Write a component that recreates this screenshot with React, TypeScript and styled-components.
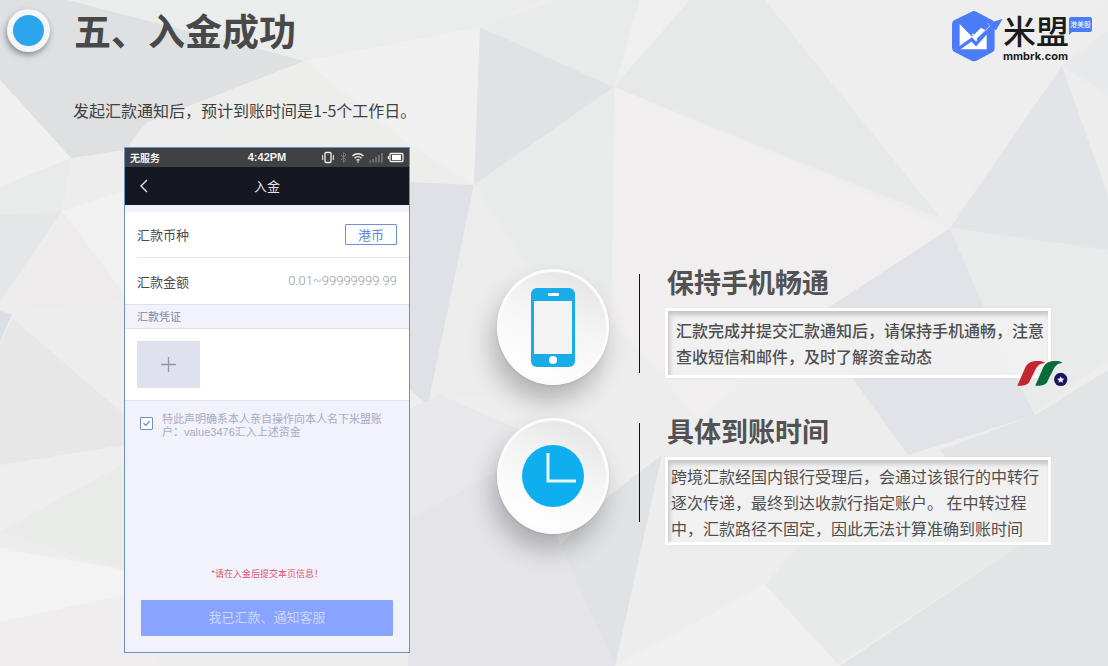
import React from "react";
import styled, { createGlobalStyle } from "styled-components";

const sans = `"Noto Sans CJK SC", "Liberation Sans", sans-serif`;
const latinFirst = `"Liberation Sans", "Noto Sans CJK SC", sans-serif`;

const GlobalStyle = createGlobalStyle`
  * { box-sizing: border-box; }
  body { margin: 0; font-family: ${sans}; background: #ededed; }
  h1, h2, p { margin: 0; }
  button, input { font-family: inherit; }
`;

const Page = styled.div`
  position: relative;
  isolation: isolate;
  min-height: 100vh;
  overflow: hidden;
`;

const Backdrop = styled.svg`
  position: absolute;
  inset: 0;
  z-index: -1;
  width: 100%;
  height: 100%;
`;

const Header = styled.header`
  display: flex;
  align-items: center;
  height: 64px;
  padding: 0 16px 0 7px;
`;

const Bullet = styled.span`
  width: 43px;
  height: 43px;
  margin-bottom: 4px;
  border: 6px solid #f6f6f6;
  border-radius: 50%;
  background: #2ba5ec;
  box-shadow: -1px 3px 6px rgba(0, 0, 0, 0.4);
`;

const Title = styled.h1`
  flex: 1;
  padding: 0 0 4px 24px;
  font-size: 37px;
  line-height: 60px;
  font-weight: 700;
  color: #484848;
`;

const Brand = styled.a`
  display: flex;
  align-items: flex-start;
  height: 52px;
  margin-top: 8px;
  color: #1b1b1b;
  text-decoration: none;
`;

const BrandMark = styled.svg`
  width: 52px;
  height: 52px;
`;

const BrandText = styled.span`
  display: flex;
  flex-direction: column;
  width: 66px;
`;

const BrandName = styled.span`
  font-size: 33px;
  line-height: 40px;
  font-weight: 500;
`;

const BrandDomain = styled.span`
  font: 700 11px/12px Inter, "Liberation Sans", sans-serif;
`;

const BrandTag = styled.span`
  position: relative;
  width: 23px;
  height: 15px;
  margin-top: 7px;
  border-radius: 2px;
  background: #4c7cf5;
  color: #fff;
  font-size: 7px;
  line-height: 15px;
  text-align: center;

  &::after {
    content: "";
    position: absolute;
    left: 0;
    top: 13px;
    border-left: 5px solid #4c7cf5;
    border-bottom: 5px solid transparent;
  }
`;

const Lead = styled.p`
  padding: 34px 16px 25px 73px;
  font-size: 16px;
  line-height: 24px;
  color: #3f3f3f;
`;

const Main = styled.main`
  display: flex;
  align-items: flex-start;
  gap: 87px;
  padding: 0 57px 13px 124px;
`;

const Phone = styled.section`
  flex: 0 0 286px;
  border: 1px solid #6d90c0;
  background: #f1f2fa;
`;

const StatusBar = styled.div`
  display: grid;
  grid-template-columns: 1fr auto 1fr;
  align-items: center;
  height: 19px;
  padding: 0 5px;
  background: #404144;
  color: #f2f2f2;
  font-size: 10px;
  line-height: 19px;
  font-weight: 700;
`;

const StatusTime = styled.span`
  font: 700 11px/19px "Liberation Sans", sans-serif;
`;

const StatusIcons = styled.svg`
  justify-self: end;
  width: 82px;
  height: 13px;
`;

const NavBar = styled.div`
  display: grid;
  grid-template-columns: 38px 1fr 38px;
  align-items: center;
  height: 38px;
  background: #151722;
  color: #e6e7eb;
  font-size: 13px;
  line-height: 38px;
  text-align: center;
`;

const BackButton = styled.button`
  display: grid;
  place-items: center;
  height: 38px;
  padding: 0;
  border: 0;
  background: none;
  color: inherit;
`;

const Fields = styled.div`
  margin-top: 7px;
  padding-left: 12px;
  background: #fff;
`;

const Field = styled.div<{ $divided?: boolean }>`
  display: flex;
  align-items: center;
  justify-content: space-between;
  height: 46px;
  padding-right: 12px;
  border-bottom: ${(p) => (p.$divided ? "1px solid #e4e5ea" : "0")};
  color: #4b4b4f;
  font-size: 13px;
`;

const CurrencyButton = styled.button`
  width: 52px;
  height: 21px;
  padding: 0;
  border: 1px solid #6f90de;
  border-radius: 1px;
  background: #fff;
  color: #6487dc;
  font-size: 13px;
  line-height: 17px;
`;

const AmountInput = styled.input`
  width: 130px;
  padding: 0;
  border: 0;
  background: none;
  font: 300 13px/20px Roboto, sans-serif;
  text-align: right;

  &::placeholder { color: #9798a5; opacity: 1; }
`;

const SectionLabel = styled.div`
  padding-left: 12px;
  border: solid #dfe1ec;
  border-width: 1px 0;
  color: #8286a4;
  font-size: 11px;
  line-height: 22px;
  padding-bottom: 1px;
`;

const Voucher = styled.div`
  padding: 12px;
  background: #fff;
  border-bottom: 1px solid #e2e4ee;
`;

const UploadButton = styled.button`
  display: grid;
  place-items: center;
  width: 63px;
  height: 47px;
  padding: 0;
  border: 0;
  background: #e0e1ee;
  color: #9395ab;
`;

const Declaration = styled.label`
  display: flex;
  gap: 9px;
  padding: 12px 12px 0 15px;
  color: #a9abc4;
  font: 11px/13px ${latinFirst};
`;

const Check = styled.input`
  appearance: none;
  flex: 0 0 13px;
  height: 13px;
  margin: 4px 0 0;
  border: 1px solid #6f8fce;
  border-radius: 1px;
  background: #fff url("data:image/svg+xml,%3Csvg xmlns='http://www.w3.org/2000/svg' viewBox='0 0 11 11'%3E%3Cpath d='M2.5 5.2l2.2 2.3 4-4.3' fill='none' stroke='%235f83cc' stroke-width='1.2'/%3E%3C/svg%3E");
`;

const Note = styled.p`
  margin-top: 128px;
  color: #dc5470;
  font: 9px/14px ${sans};
  text-align: center;
`;

const SubmitButton = styled.button`
  display: block;
  width: calc(100% - 32px);
  height: 36px;
  margin: 19px 16px 16px;
  padding: 0 0 2px;
  border: 0;
  border-radius: 1px;
  background: #88a4ff;
  color: #cbd6fd;
  font-size: 13px;
  line-height: 34px;
`;

const Notes = styled.section`
  flex: 1;
  display: flex;
  flex-direction: column;
  gap: 30px;
  padding-top: 119px;
`;

const Item = styled.article`
  display: flex;
  align-items: flex-start;
`;

const Disc = styled.div`
  flex: 0 0 112px;
  display: grid;
  place-items: center;
  height: 116px;
  margin-top: 3px;
  border: 3px solid #fbfbfb;
  border-radius: 50%;
  background: linear-gradient(205deg, #e3e3e3 5%, #f5f5f5 45%, #fdfdfd 80%);
  box-shadow: -5px 16px 24px rgba(0, 0, 0, 0.24), 0 1px 3px rgba(0, 0, 0, 0.08);
`;

const Rule = styled.span`
  flex: 0 0 1px;
  height: 99px;
  margin: 8px 25px 0 30px;
  background: #111;
`;

const ItemBody = styled.div`
  flex: 1;
  min-width: 0;
`;

const ItemTitle = styled.h2`
  padding: 0 0 2px 2px;
  font-size: 27px;
  line-height: 32px;
  font-weight: 700;
  color: #525252;
`;

const Panel = styled.div<{ $inset: string; $strong?: boolean }>`
  position: relative;
  margin-top: 8px;
  padding: ${(p) => p.$inset};
  border: 3px solid #fff;
  background: rgba(241, 241, 241, 0.92);
  box-shadow: inset 2px 4px 4px rgba(0, 0, 0, 0.18), 0 0 2px rgba(0, 0, 0, 0.06);
  color: #4f4f4f;
  font-size: 16px;
  font-weight: ${(p) => (p.$strong ? 500 : 400)};
  line-height: 26px;
`;

const Watermark = styled.svg`
  position: absolute;
  right: -20px;
  bottom: -12px;
  width: 51px;
  height: 27px;
`;

const facets: [string, string][] = [
  ["0,0 68,0 305,61 146,123 125,150 71,158 0,80", "#dee0e2"],
  ["68,0 540,0 480,27 305,61", "#ebecec"],
  ["305,61 480,27 474,185 410,145 146,123", "#f0f0f0"],
  ["305,61 410,145 474,185 410,182 146,123", "#ededec"],
  ["0,80 71,158 0,187", "#f0f0f0"],
  ["71,158 0,187 0,215 62,211", "#e8ebea"],
  ["0,215 62,211 0,302", "#e4e6e8"],
  ["62,211 122,293 122,300 12,311", "#edebec"],
  ["62,211 125,190 125,295", "#f1f1f1"],
  ["0,311 12,314 0,342", "#dcdfe6"],
  ["12,318 125,415 125,445 0,465 0,345", "#e7e7e7"],
  ["0,465 125,445 125,465 0,530", "#eeeeee"],
  ["0,532 125,463 125,570", "#e9ebe9"],
  ["0,548 125,570 125,595 0,622", "#f3f3f3"],
  ["0,622 125,595 160,666 0,666", "#efedee"],
  ["480,27 614,87 474,185", "#e0e2e5"],
  ["480,27 560,0 640,0 614,87", "#e9ebea"],
  ["614,87 640,0 690,0", "#efefef"],
  ["614,87 690,0 765,0 945,220", "#e6e9e8"],
  ["765,0 1108,0 1062,66 947,226", "#eeeeee"],
  ["614,87 950,228 825,310 700,420 612,320", "#f0eeef"],
  ["474,185 614,87 612,300 530,270", "#e8ebea"],
  ["408,182 474,185 428,405 408,388", "#e0e1e7"],
  ["474,185 530,270 612,300 600,400 440,395 428,405", "#ececec"],
  ["1062,66 1108,196 1108,250 950,228", "#e2e4e7"],
  ["1062,66 1108,30 1108,95", "#e8e9ea"],
  ["950,228 825,310 850,375 908,455 1035,415 985,310", "#e2e3e8"],
  ["950,228 1108,250 1108,360 1035,412 985,310", "#e9eaea"],
  ["1035,415 1108,370 1108,666 840,666 1020,545 940,450", "#e3e4e6"],
  ["408,410 440,395 520,430 560,545 615,666 408,666", "#e4e4e9"],
  ["408,410 440,395 520,430 500,470 408,520", "#e8e8eb"],
  ["560,545 610,495 662,455 615,666", "#e0e2e4"],
  ["765,585 840,666 615,666", "#f0f0f0"],
  ["765,585 800,545 1020,545 838,664", "#e7eae8"],
];

function BrandIcon() {
  return (
    <BrandMark viewBox="62 28 156 156" aria-hidden="true">
      <path d="M124 33q7-4 14 0l48 26q7 4 7 12v72q0 8-7 12l-48 25q-7 4-14 0l-53-27q-6-4-6-12V71q0-8 6-12z" fill="#4c7cf5" />
      <path d="M88 70l37 38 27-27 17 10v55H88z" fill="#fff" />
      <path d="M82 146l42-30 13 14 54-60" fill="none" stroke="#4c7cf5" strokeWidth="10" />
      <path d="M140 112l40-40 9 8z" fill="#4c7cf5" />
      <path d="M172 68l10 7-42 38-15-13" fill="none" stroke="#fff" strokeWidth="4" />
      <path d="M217 54l-46 15 9 7-41 38 5 10 44-42 9 7z" fill="#4c7cf5" />
    </BrandMark>
  );
}

function PhoneStatusIcons() {
  return (
    <StatusIcons viewBox="0 0 82 13" fill="none" stroke="#f2f2f2" aria-hidden="true">
      <rect x="3" y="1.5" width="6" height="10" rx="1" strokeWidth="1.3" />
      <path d="M.7 4v5M11.3 4v5" strokeWidth="1" />
      <path d="M19 4l5 5-2.500 2.500v-10L24 4l-5 5" stroke="#737478" />
      <path d="M30.500 5a8 8 0 0 1 11 0M32.500 7.200a5 5 0 0 1 7 0M34.500 9.300a2.500 2.500 0 0 1 3 0" strokeWidth="1.4" />
      <circle cx="36" cy="11" r=".8" fill="#f2f2f2" stroke="none" />
      <path d="M48 11.500v-2M51 11.500V8M54 11.500V6M57 11.500V4M60 11.500V2" stroke="#77787b" strokeWidth="1.6" />
      <rect x="68" y="2.500" width="13" height="8" rx="1" strokeWidth="1.3" />
      <path d="M66.500 5v3" strokeWidth="1.500" />
      <rect x="70" y="4" width="9" height="5" fill="#fff" stroke="none" />
    </StatusIcons>
  );
}

function PhoneScreen() {
  return (
    <Phone aria-label="入金">
      <StatusBar>
        <span>无服务</span>
        <StatusTime>4:42PM</StatusTime>
        <PhoneStatusIcons />
      </StatusBar>
      <NavBar>
        <BackButton type="button" aria-label="返回">
          <svg width="10" height="14" viewBox="0 0 10 14" fill="none" stroke="currentColor" strokeWidth="1.4">
            <path d="M8 1L2 7l6 6" />
          </svg>
        </BackButton>
        <span>入金</span>
      </NavBar>
      <Fields>
        <Field $divided>
          <span id="currency">汇款币种</span>
          <CurrencyButton type="button" aria-describedby="currency">港币</CurrencyButton>
        </Field>
        <Field>
          <label htmlFor="amount">汇款金额</label>
          <AmountInput id="amount" type="text" placeholder="0.01~99999999.99" />
        </Field>
      </Fields>
      <SectionLabel>汇款凭证</SectionLabel>
      <Voucher>
        <UploadButton type="button" aria-label="添加汇款凭证">
          <svg width="15" height="15" viewBox="0 0 15 15" stroke="currentColor" strokeWidth="1.3">
            <path d="M7.500 0v15M0 7.500h15" />
          </svg>
        </UploadButton>
      </Voucher>
      <Declaration>
        <Check type="checkbox" defaultChecked />
        <span>
          特此声明确系本人亲自操作向本人名下米盟账
          <br />
          户：value3476汇入上述资金
        </span>
      </Declaration>
      <Note>*请在入金后提交本页信息！</Note>
      <SubmitButton type="button">我已汇款、通知客服</SubmitButton>
    </Phone>
  );
}

export default function App() {
  return (
    <Page>
      <GlobalStyle />
      <Backdrop viewBox="0 0 1108 666" preserveAspectRatio="none" aria-hidden="true">
        {facets.map(([points, fill]) => (
          <polygon key={points} points={points} fill={fill} />
        ))}
      </Backdrop>

      <Header>
        <Bullet />
        <Title>五、入金成功</Title>
        <Brand href="#">
          <BrandIcon />
          <BrandText>
            <BrandName>米盟</BrandName>
            <BrandDomain>mmbrk.com</BrandDomain>
          </BrandText>
          <BrandTag>港美股</BrandTag>
        </Brand>
      </Header>

      <Lead>发起汇款通知后，预计到账时间是1-5个工作日。</Lead>

      <Main>
        <PhoneScreen />
        <Notes>
          <Item>
            <Disc>
              <svg width="44" height="79" viewBox="0 0 44 79" aria-hidden="true">
                <rect width="44" height="79" rx="6" fill="#18ade8" />
                <rect x="3" y="13" width="38" height="53" fill="#f3f3f3" />
                <rect x="17" y="5" width="11" height="3" rx="1" fill="#fff" />
                <circle cx="22" cy="72" r="4" fill="#fff" />
              </svg>
            </Disc>
            <Rule />
            <ItemBody>
              <ItemTitle>保持手机畅通</ItemTitle>
              <Panel $inset="6px 0 6px 8px" $strong>
                汇款完成并提交汇款通知后，请保持手机通畅，注意
                <br />
                查收短信和邮件，及时了解资金动态
                <Watermark viewBox="1087 300 154 80" aria-hidden="true">
                  <path d="M1088 377L1112 322C1120 306 1132 302 1150 302C1160 302 1168 304 1172 308C1158 309 1150 314 1144 326L1124 366C1119 375 1108 378 1088 377Z" fill="#c4262e" />
                  <path d="M1142 377L1166 322C1174 306 1186 302 1204 302C1214 302 1220 304 1224 308C1211 309 1204 314 1198 326L1178 366C1173 375 1162 378 1142 377Z" fill="#0a6b3a" />
                  <circle cx="1219" cy="358" r="20" fill="#1b1464" />
                  <path d="M1219 348l3 7 8 1-6 5 2 7-7-4-7 4 2-7-6-5 8-1z" fill="#fff" />
                </Watermark>
              </Panel>
            </ItemBody>
          </Item>
          <Item>
            <Disc>
              <svg width="64" height="64" viewBox="0 0 64 64" aria-hidden="true">
                <circle cx="32" cy="32" r="31" fill="#0eafee" />
                <path d="M27 9v28h28" fill="none" stroke="#e9f7fd" strokeWidth="3" />
              </svg>
            </Disc>
            <Rule />
            <ItemBody>
              <ItemTitle>具体到账时间</ItemTitle>
              <Panel $inset="3px 0 1px 3px">
                跨境汇款经国内银行受理后，会通过该银行的中转行
                <br />
                逐次传递，最终到达收款行指定账户。 在中转过程
                <br />
                中，汇款路径不固定，因此无法计算准确到账时间
              </Panel>
            </ItemBody>
          </Item>
        </Notes>
      </Main>
    </Page>
  );
}
